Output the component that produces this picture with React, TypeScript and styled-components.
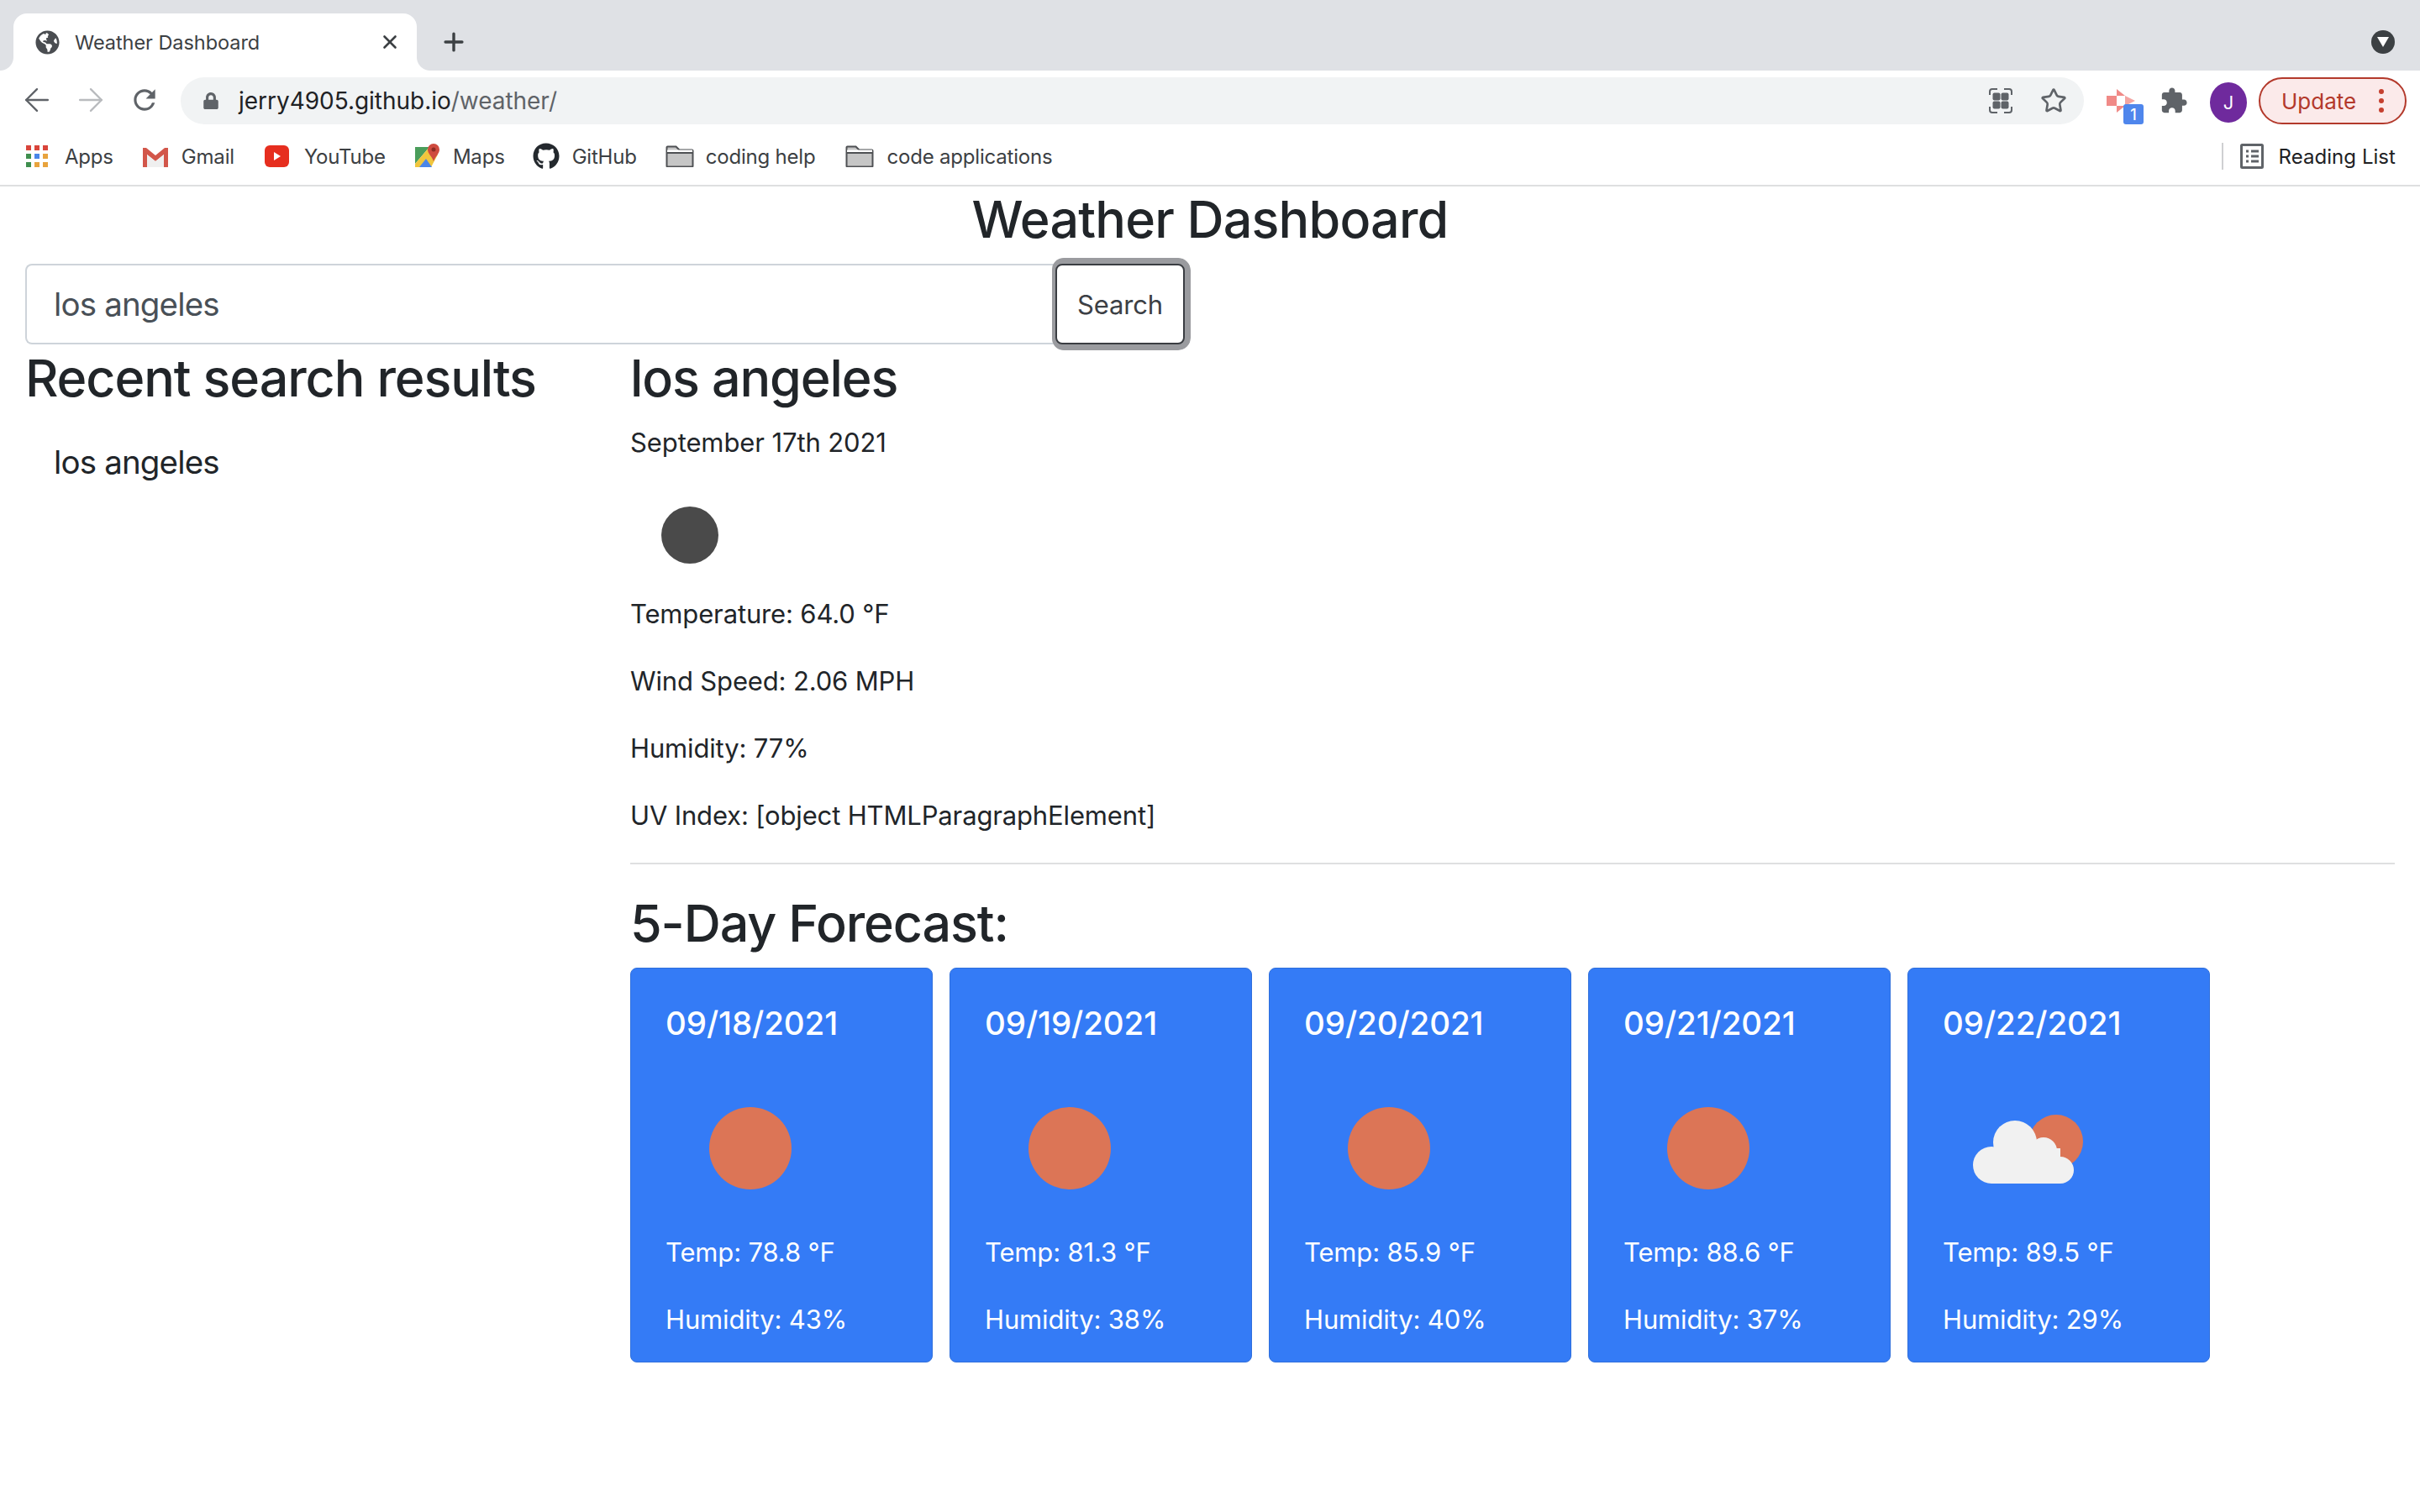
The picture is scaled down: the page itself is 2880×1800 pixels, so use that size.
import React from 'react'
import styled, { createGlobalStyle } from 'styled-components'
import { ArrowLeft, ArrowRight, Star, X, Plus } from 'lucide-react'
import { FaGithub, FaGlobeAmericas, FaLock } from 'react-icons/fa'

const GlobalStyle = createGlobalStyle`
  html, body {
    margin: 0;
    padding: 0;
    background: #fff;
  }
  body {
    font-family: Inter, "Liberation Sans", sans-serif;
    color: #212529;
  }
  * {
    box-sizing: border-box;
  }
`

const Page = styled.div`
  width: 2880px;
  height: 1800px;
  overflow: hidden;
  background: #fff;
`

/* browser chrome */

const TabStrip = styled.div`
  height: 84px;
  background: #dfe1e5;
  display: flex;
  align-items: flex-end;
`

const Tab = styled.div`
  position: relative;
  width: 480px;
  height: 68px;
  margin-left: 16px;
  background: #fff;
  border-radius: 16px 16px 0 0;
  display: flex;
  align-items: center;
  padding: 0 0 0 26px;
  color: #3c4043;
  font-size: 23.5px;
  letter-spacing: -0.05px;

  &::before,
  &::after {
    content: '';
    position: absolute;
    bottom: 0;
    width: 16px;
    height: 16px;
  }
  &::before {
    left: -16px;
    background: radial-gradient(circle at 0 0, #dfe1e5 15.5px, #fff 16.5px);
  }
  &::after {
    right: -16px;
    background: radial-gradient(circle at 100% 0, #dfe1e5 15.5px, #fff 16.5px);
  }
`

const TabTitle = styled.span`
  margin-left: 18px;
  flex: 1;
  white-space: nowrap;
`

const TabClose = styled.span`
  display: flex;
  margin-right: 19px;
  color: #3c4043;
`

const NewTab = styled.span`
  display: flex;
  margin: 0 0 17px 27px;
  color: #3c4043;
`

const TabMenu = styled.span`
  margin: 0 30px 20px auto;
  width: 28px;
  height: 28px;
  border-radius: 50%;
  background: #3c4043;
  display: flex;
  align-items: center;
  justify-content: center;
`

const Toolbar = styled.div`
  height: 64px;
  padding: 8px 16px 0 26px;
  background: #fff;
  display: flex;
  align-items: flex-start;
`

const NavGroup = styled.div`
  display: flex;
  gap: 28px;
  padding-top: 9px;
`

const NavButton = styled.span<{ $muted?: boolean }>`
  width: 36px;
  height: 36px;
  display: flex;
  align-items: center;
  justify-content: center;
  color: ${({ $muted }) => ($muted ? '#b9bbbe' : '#5f6368')};

  svg {
    flex-shrink: 0;
  }
`

const Omnibox = styled.div`
  flex: 1;
  height: 56px;
  margin: 0 27px 0 25px;
  padding: 0 20px 0 29px;
  border-radius: 28px;
  background: #f1f3f4;
  display: flex;
  align-items: center;
  font-size: 28px;
  letter-spacing: -0.03px;
  color: #202124;
`

const LockIcon = styled.span`
  display: flex;
  color: #5f6368;
  margin-right: 23px;
  margin-left: -3px;
`

const UrlPath = styled.span`
  color: #5f6368;
`

const OmniActions = styled.div`
  margin-left: auto;
  display: flex;
  align-items: center;
  gap: 33px;
  color: #5f6368;
`

const ExtensionSlot = styled.div`
  position: relative;
  width: 34px;
  height: 56px;
  display: flex;
  align-items: center;
`

const ExtensionBadge = styled.span`
  position: absolute;
  left: 20px;
  top: 32px;
  width: 24px;
  height: 24px;
  border-radius: 3px;
  background: #4f86ec;
  color: #fff;
  font-size: 18px;
  font-weight: 500;
  display: flex;
  align-items: center;
  justify-content: center;
`

const PuzzleSlot = styled.span`
  display: flex;
  margin: 11px 0 0 29px;
`

const Avatar = styled.span`
  width: 44px;
  height: 48px;
  margin: 6px 0 0 26px;
  border-radius: 50%;
  background: #6f2a9d;
  color: #fff;
  font-size: 22px;
  display: flex;
  align-items: center;
  justify-content: center;
`

const UpdatePill = styled.div`
  width: 176px;
  height: 56px;
  margin-left: 14px;
  border: 2px solid #b3392b;
  border-radius: 28px;
  background: #fbeaea;
  color: #b3392b;
  font-size: 26px;
  display: flex;
  align-items: center;
  padding-left: 25px;
`

const UpdateDots = styled.span`
  margin-left: auto;
  margin-right: 25px;
  display: flex;
  flex-direction: column;
  gap: 5px;

  i {
    display: block;
    width: 6px;
    height: 6px;
    border-radius: 50%;
    background: #c5402f;
  }
`

const BookmarkBar = styled.div`
  height: 74px;
  padding: 4px 29px 0 31px;
  background: #fff;
  border-bottom: 2px solid #dedfe0;
  display: flex;
  align-items: center;
  font-size: 24px;
  letter-spacing: -0.2px;
  color: #3c4043;
`

const Bookmark = styled.div<{ $gap: number; $before: number }>`
  display: flex;
  align-items: center;
  gap: ${({ $gap }) => $gap}px;
  margin-left: ${({ $before }) => $before}px;
  white-space: nowrap;
`

const ReadingList = styled.div`
  margin-left: auto;
  padding-left: 20px;
  height: 32px;
  border-left: 2px solid #cfd0d2;
  display: flex;
  align-items: center;
  gap: 18px;
  letter-spacing: 0.05px;
  color: #202124;
`

/* page */

const Title = styled.h1`
  margin: 0 0 14px;
  font-size: 61px;
  font-weight: 500;
  line-height: 78px;
  text-align: center;
  letter-spacing: -0.8px;
`

const SearchRow = styled.form`
  display: flex;
  margin: 0 0 0 30px;
`

const SearchInput = styled.input`
  width: 1226px;
  height: 96px;
  padding: 0 32px;
  border: 2px solid #ced4da;
  border-right: none;
  border-radius: 8px 0 0 8px;
  background: #fff;
  color: #495057;
  font-family: inherit;
  font-size: 38.5px;
  letter-spacing: -0.85px;
  outline: none;
`

const SearchButton = styled.button`
  width: 154px;
  height: 96px;
  border: 2px solid #3a3d42;
  border-radius: 8px;
  background: #fff;
  color: #3c4045;
  font-family: inherit;
  font-size: 31px;
  letter-spacing: -0.15px;
  box-shadow: 0 0 0 7px #9a9b9f;
  clip-path: inset(-7px -7px -7px -4px round 14px);
`

const Content = styled.div`
  display: grid;
  grid-template-columns: 720px 2100px;
  padding: 0 30px;
`

const SectionTitle = styled.h2`
  margin: 0;
  font-size: 61px;
  font-weight: 500;
  line-height: 80px;
  letter-spacing: -1.1px;
`

const RecentItem = styled.div`
  margin-top: 30px;
  padding-left: 34px;
  font-size: 38.5px;
  letter-spacing: -0.85px;
  line-height: 60px;
`

const DateLine = styled.p`
  margin: 13px 0 16px;
  font-size: 31px;
  letter-spacing: -0.1px;
  line-height: 48px;
`

const CurrentIcon = styled.svg`
  display: block;
  width: 142px;
  height: 140px;
`

const Stat = styled.p`
  margin: 0 0 32px;
  font-size: 31px;
  letter-spacing: -0.15px;
  line-height: 48px;
`

const Rule = styled.hr`
  margin: 29px 0 30px;
  height: 2px;
  border: none;
  background: #dfe0e1;
`

const CardRow = styled.div`
  display: flex;
  gap: 20px;
  margin-top: 13px;
`

const Card = styled.div`
  width: 360px;
  height: 470px;
  padding: 41px 41px 0;
  border: 1px solid #2f6fdc;
  border-radius: 8px;
  background: #347bf6;
  color: #fff;
`

const CardDate = styled.h5`
  margin: 0 0 25px;
  font-size: 38.5px;
  font-weight: 500;
  letter-spacing: -0.1px;
  line-height: 48px;
`

const CardIcon = styled.svg`
  display: block;
  width: 200px;
  height: 200px;
  margin-left: 1px;
`

const CardStat = styled.p`
  margin: 0 0 32px;
  font-size: 31px;
  letter-spacing: -0.15px;
  line-height: 48px;
`

const FolderIcon = () => (
  <svg width="34" height="26" viewBox="0 0 34 26">
    <path d="M1.5 24.5V2.5a1 1 0 0 1 1-1h10l4 4h15a1 1 0 0 1 1 1v18a1 1 0 0 1-1 1h-29a1 1 0 0 1-1-1z" fill="#c6c6c6" stroke="#4f5154" strokeWidth="2" />
    <path d="M2 5.5h30V9H2z" fill="#fff" />
    <path d="M2 9h30" stroke="#4f5154" strokeWidth="2" />
  </svg>
)

const AppsIcon = () => (
  <svg width="26" height="26" viewBox="0 0 26 26">
    {['#d9453b', '#d9453b', '#d9453b', '#3f8f4e', '#4a86e8', '#e8a33d', '#3f8f4e', '#e8a33d', '#e8a33d'].map((c, i) => (
      <rect key={i} x={(i % 3) * 10} y={Math.floor(i / 3) * 10} width="6" height="6" fill={c} />
    ))}
  </svg>
)

const GmailIcon = () => (
  <svg width="32" height="26" viewBox="0 0 32 26">
    <path d="M1 3h4l11 9 11-9h4v23h-5V11l-10 8-10-8v15H1z" fill="#d2564a" />
    <path d="M6 11l10 8 10-8v15H6z" fill="#efefef" />
  </svg>
)

const YoutubeIcon = () => (
  <svg width="29" height="26" viewBox="0 0 29 26">
    <rect width="29" height="26" rx="6" fill="#e62e1f" />
    <path d="M11 8l8 5-8 5z" fill="#fff" />
  </svg>
)

const MapsIcon = () => (
  <svg width="30" height="30" viewBox="0 0 30 30">
    <path d="M1 4h17L1 24z" fill="#4a9d5b" />
    <path d="M1 24L18 4l10 9-8 15H1z" fill="#f0c63d" />
    <path d="M6 28l8-10 7 10z" fill="#4a86e8" />
    <path d="M23 0a7 7 0 0 1 7 7c0 5-5 8-7 14-2-6-7-9-7-14a7 7 0 0 1 7-7z" fill="#cf4b3f" />
    <circle cx="23" cy="7" r="2.5" fill="#8e2c24" />
  </svg>
)

const ReadingListIcon = () => (
  <svg width="28" height="30" viewBox="0 0 28 30">
    <rect x="1.5" y="1.5" width="25" height="27" rx="1" fill="none" stroke="#5f6368" strokeWidth="3" />
    <path d="M7 9h3M13 9h9M7 15h3M13 15h9M7 21h3M13 21h9" stroke="#5f6368" strokeWidth="3" />
  </svg>
)

const ExtensionIcon = () => (
  <svg width="34" height="28" viewBox="0 0 34 28">
    <path d="M0 8h12v12H0z" fill="#f08a87" />
    <path d="M12 0l10 8H12zM12 20h10l-10 8z" fill="#f08a87" />
    <path d="M22 8l12 6-12 6z" fill="#f3a5a2" />
  </svg>
)

const TabSearchIcon = () => (
  <svg width="28" height="30" viewBox="0 0 28 30">
    <path d="M1 8V4a3 3 0 0 1 3-3h6M18 1h6a3 3 0 0 1 3 3v4M27 22v4a3 3 0 0 1-3 3h-6M10 29H4a3 3 0 0 1-3-3v-4" fill="none" stroke="#5f6368" strokeWidth="2" />
    <rect x="4.5" y="5.5" width="9" height="9" rx="2" fill="#5f6368" />
    <rect x="14.5" y="5.5" width="9" height="9" rx="2" fill="#5f6368" />
    <rect x="4.5" y="15.5" width="9" height="9" rx="2" fill="#5f6368" />
    <rect x="14.5" y="15.5" width="9" height="9" rx="2" fill="#5f6368" />
  </svg>
)

const ReloadIcon = () => (
  <svg width="38" height="38" viewBox="0 0 24 24" fill="currentColor">
    <path d="M17.65 6.35A7.958 7.958 0 0 0 12 4c-4.42 0-7.99 3.58-7.99 8s3.57 8 7.99 8c3.73 0 6.84-2.55 7.73-6h-2.08A5.99 5.99 0 0 1 12 18c-3.31 0-6-2.69-6-6s2.69-6 6-6c1.66 0 3.14.69 4.22 1.78L13 11h7V4l-2.35 2.35z" />
  </svg>
)

const PuzzleIcon = () => (
  <svg width="34" height="34" viewBox="0 0 24 24" fill="#5f6368">
    <path d="M20.5 11H19V7c0-1.1-.9-2-2-2h-4V3.5C13 2.12 11.88 1 10.5 1S8 2.12 8 3.5V5H4c-1.1 0-2 .9-2 2v3.8h1.5c1.49 0 2.7 1.21 2.7 2.7s-1.21 2.7-2.7 2.7H2V20c0 1.1.9 2 2 2h3.8v-1.5c0-1.49 1.21-2.7 2.7-2.7 1.49 0 2.7 1.21 2.7 2.7V22H17c1.1 0 2-.9 2-2v-4h1.5c1.38 0 2.5-1.12 2.5-2.5S21.88 11 20.5 11z" />
  </svg>
)

const SunIcon = () => (
  <CardIcon viewBox="0 0 200 200">
    <circle cx="100" cy="100" r="49" fill="#dc7556" />
  </CardIcon>
)

const CloudSunIcon = () => (
  <CardIcon viewBox="0 0 200 200">
    <circle cx="134" cy="92" r="32" fill="#dc7556" />
    <g fill="#f1f1f1">
      <circle cx="57" cy="120" r="22" />
      <circle cx="85" cy="93" r="26" />
      <circle cx="119" cy="103" r="16" />
      <circle cx="139" cy="126" r="16" />
      <rect x="57" y="100" width="82" height="42" />
    </g>
  </CardIcon>
)

const bookmarks = [
  { label: 'Apps', icon: <AppsIcon />, before: 0, gap: 20 },
  { label: 'Gmail', icon: <GmailIcon />, before: 34, gap: 15 },
  { label: 'YouTube', icon: <YoutubeIcon />, before: 36, gap: 18 },
  { label: 'Maps', icon: <MapsIcon />, before: 34, gap: 16 },
  { label: 'GitHub', icon: <FaGithub size={32} color="#24292e" />, before: 33, gap: 15 },
  { label: 'coding help', icon: <FolderIcon />, before: 34, gap: 14 },
  { label: 'code applications', icon: <FolderIcon />, before: 36, gap: 15 },
]

const forecast = [
  { date: '09/18/2021', temp: '78.8', humidity: 43 },
  { date: '09/19/2021', temp: '81.3', humidity: 38 },
  { date: '09/20/2021', temp: '85.9', humidity: 40 },
  { date: '09/21/2021', temp: '88.6', humidity: 37 },
  { date: '09/22/2021', temp: '89.5', humidity: 29, cloudy: true },
]

const App = () => {
  return (
    <Page>
      <GlobalStyle />
      <TabStrip>
        <Tab>
          <FaGlobeAmericas size={29} color="#4a4d51" />
          <TabTitle>Weather Dashboard</TabTitle>
          <TabClose>
            <X size={26} strokeWidth={2.4} />
          </TabClose>
        </Tab>
        <NewTab>
          <Plus size={34} strokeWidth={2.4} />
        </NewTab>
        <TabMenu>
          <svg width="14" height="12" viewBox="0 0 14 12">
            <path d="M0 0h14L7 12z" fill="#fff" />
          </svg>
        </TabMenu>
      </TabStrip>

      <Toolbar>
        <NavGroup>
          <NavButton>
            <ArrowLeft size={44} strokeWidth={1.3} />
          </NavButton>
          <NavButton $muted>
            <ArrowRight size={44} strokeWidth={1.3} />
          </NavButton>
          <NavButton>
            <ReloadIcon />
          </NavButton>
        </NavGroup>
        <Omnibox>
          <LockIcon>
            <FaLock size={20} />
          </LockIcon>
          jerry4905.github.io<UrlPath>/weather/</UrlPath>
          <OmniActions>
            <TabSearchIcon />
            <Star size={32} strokeWidth={2} />
          </OmniActions>
        </Omnibox>
        <ExtensionSlot>
          <ExtensionIcon />
          <ExtensionBadge>1</ExtensionBadge>
        </ExtensionSlot>
        <PuzzleSlot>
          <PuzzleIcon />
        </PuzzleSlot>
        <Avatar>J</Avatar>
        <UpdatePill>
          Update
          <UpdateDots>
            <i />
            <i />
            <i />
          </UpdateDots>
        </UpdatePill>
      </Toolbar>

      <BookmarkBar>
        {bookmarks.map((b) => (
          <Bookmark key={b.label} $before={b.before} $gap={b.gap}>
            {b.icon}
            {b.label}
          </Bookmark>
        ))}
        <ReadingList>
          <ReadingListIcon />
          Reading List
        </ReadingList>
      </BookmarkBar>

      <Title>Weather Dashboard</Title>
      <SearchRow onSubmit={(e) => e.preventDefault()}>
        <SearchInput readOnly value="los angeles" />
        <SearchButton type="submit">Search</SearchButton>
      </SearchRow>

      <Content>
        <div>
          <SectionTitle>Recent search results</SectionTitle>
          <RecentItem>los angeles</RecentItem>
        </div>
        <div>
          <SectionTitle>los angeles</SectionTitle>
          <DateLine>September 17th 2021</DateLine>
          <CurrentIcon viewBox="0 0 142 140">
            <circle cx="71" cy="70" r="34" fill="#4a4a4a" />
          </CurrentIcon>
          <Stat>Temperature: 64.0 °F</Stat>
          <Stat>Wind Speed: 2.06 MPH</Stat>
          <Stat>Humidity: 77%</Stat>
          <Stat>UV Index: [object HTMLParagraphElement]</Stat>
          <Rule />
          <SectionTitle>5-Day Forecast:</SectionTitle>
          <CardRow>
            {forecast.map((day) => (
              <Card key={day.date}>
                <CardDate>{day.date}</CardDate>
                {day.cloudy ? <CloudSunIcon /> : <SunIcon />}
                <CardStat>Temp: {day.temp} °F</CardStat>
                <CardStat>Humidity: {day.humidity}%</CardStat>
              </Card>
            ))}
          </CardRow>
        </div>
      </Content>
    </Page>
  )
}

export default App
